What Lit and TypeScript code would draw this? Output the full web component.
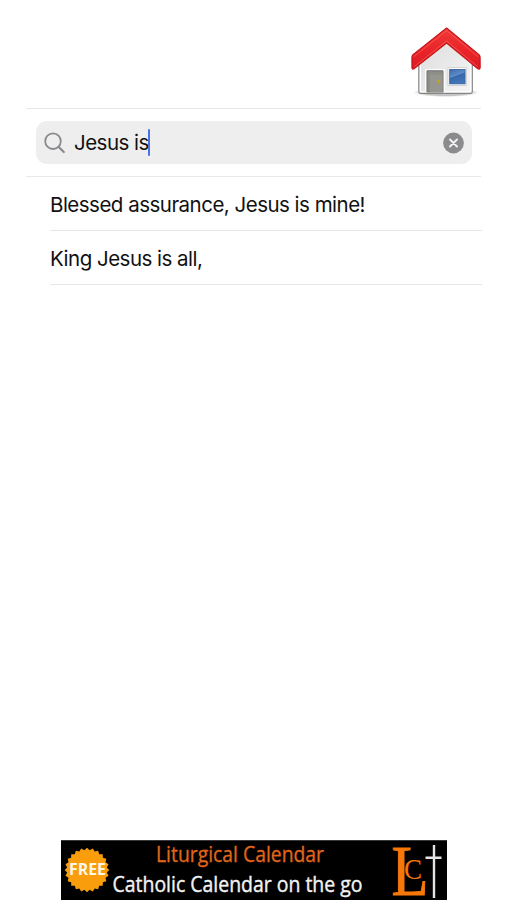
import { LitElement, html, css, svg } from "lit";
import { customElement, property } from "lit/decorators.js";

function burst(cx: number, cy: number, outer: number, inner: number, teeth: number): string {
  const pts: string[] = [];
  for (let i = 0; i < teeth * 2; i++) {
    const r = i % 2 ? inner : outer;
    const a = (Math.PI * i) / teeth - Math.PI / 2;
    pts.push(`${(cx + r * Math.cos(a)).toFixed(2)},${(cy + r * Math.sin(a)).toFixed(2)}`);
  }
  return pts.join(" ");
}

@customElement("home-icon")
class HomeIcon extends LitElement {
  static styles = css`
    :host { display: block; width: 74px; height: 74px; }
    svg { display: block; }
  `;
  render() {
    return html`<svg width="74" height="74" viewBox="0 0 74 74">
      <defs>
        <linearGradient id="roof" x1="0" y1="0" x2="0" y2="1">
          <stop offset="0" stop-color="#f03a38" /><stop offset="0.5" stop-color="#ea262a" /><stop offset="1" stop-color="#dc1a20" />
        </linearGradient>
        <linearGradient id="wall" x1="0" y1="0" x2="1" y2="1">
          <stop offset="0" stop-color="#dcdcdc" /><stop offset="1" stop-color="#f5f5f5" />
        </linearGradient>
        <linearGradient id="pane" x1="0" y1="0" x2="0.4" y2="1">
          <stop offset="0" stop-color="#3a6bab" /><stop offset="0.5" stop-color="#5f8cc6" /><stop offset="0.54" stop-color="#3868ab" /><stop offset="1" stop-color="#4274b8" />
        </linearGradient>
        <radialGradient id="shade">
          <stop offset="0.7" stop-color="#888" stop-opacity="0.5" /><stop offset="1" stop-color="#999" stop-opacity="0" />
        </radialGradient>
      </defs>
      <ellipse cx="37" cy="66.500" rx="33" ry="4.500" fill="url(#shade)" />
      <path d="M9.900 34 L37.500 11 L63.200 34 V65 Q63.200 67.300 61 67.300 H12 Q9.900 67.300 9.900 65Z" fill="url(#wall)" stroke="#858585" stroke-width="1.400" />
      <path d="M11.300 38 L37.500 16 L61.800 38 V65.900 H11.300Z" fill="none" stroke="#fff" stroke-width="1.300" />
      <path d="M17 66 V43.700 H35 V66" fill="#8c8d87" stroke="#fff" stroke-width="1.600" />
      <path d="M18 66 V44.800 H34 V66Z" fill="#8c8d87" stroke="#747571" stroke-width="0.900" />
      <path d="M21 66 V48.500 H33.500 V66Z" fill="#95968f" />
      <circle cx="29.400" cy="55.600" r="1.800" fill="#c0a428" />
      <rect x="39" y="41.800" width="18.600" height="17.600" fill="#fff" stroke="#bbb" stroke-width="0.600" />
      <rect x="40.700" y="43.400" width="15.400" height="14.500" fill="url(#pane)" stroke="#355f99" stroke-width="0.800" />
      <path d="M37.600 2 L4 28.600 Q3 29.500 2.900 31 L2.900 41.500 Q3.100 44 5 42.800 L37.600 17 L68.800 42.800 Q71 44 71.200 41.500 L71.100 31 Q71 29.500 70 28.600Z" fill="url(#roof)" stroke="#c4161b" stroke-width="1.100" stroke-linejoin="round" />
      <path d="M4.500 31 L37.600 4.500 L69.500 31 M5.500 40.500 L37.600 15 L68.500 40.500" fill="none" stroke="#ff7772" stroke-width="0.800" opacity="0.65" />
    </svg>`;
  }
}

@customElement("search-field")
class SearchField extends LitElement {
  @property() value = "";
  static styles = css`
    :host { display: flex; align-items: center; height: 43px; border-radius: 11px; background: #eeeeee; box-sizing: border-box; padding: 0 8px 0 8px; }
    svg { display: block; flex: none; }
    .query { margin-left: 8px; padding-top: 1px; font-size: 20.5px; line-height: 26px; letter-spacing: -0.52px; color: #111; white-space: nowrap; }
    .caret { width: 2.5px; height: 27px; margin-left: -1px; background: #4a72e8; border-radius: 1px; }
    .clear { margin-left: auto; }
  `;
  render() {
    return html`
      <svg width="22" height="22" viewBox="0 0 22 22" fill="none" stroke="#8a8a8e" stroke-width="1.8" stroke-linecap="round">
        <circle cx="9" cy="9.200" r="7.800" /><path d="M14.700 15 L19.800 20" stroke-width="2.200" />
      </svg>
      <span class="query">${this.value}</span><span class="caret"></span>
      <svg class="clear" width="22" height="22" viewBox="0 0 22 22">
        <circle cx="11.500" cy="11" r="10.400" fill="#8b8b8e" />
        <path d="M8 7.500 L15 14.500 M15 7.500 L8 14.500" stroke="#f3f3f3" stroke-width="1.900" stroke-linecap="round" />
      </svg>`;
  }
}

@customElement("ad-banner")
class AdBanner extends LitElement {
  static styles = css`
    :host { display: block; width: 386px; height: 60px; background: #000; }
    svg { display: block; }
    .sans { font-family: "Open Sans", "Noto Sans", sans-serif; }
    .serif { font-family: "Liberation Serif", serif; }
  `;
  render() {
    return html`<svg width="386" height="60" viewBox="0 0 386 60">
      <path d="M0 0.300 H386" stroke="#777" stroke-width="0.600" />
      ${svg`<polygon points=${burst(26, 30, 22.3, 20, 24)} fill="#f99d0d" />`}
      <text class="sans" x="8" y="35.300" font-size="16" font-weight="700" fill="#fff8e8" textLength="37" lengthAdjust="spacingAndGlyphs">FREE</text>
      <text class="sans" x="95" y="22" font-size="21.500" fill="#e2661a" stroke="#e2661a" stroke-width="0.300" textLength="168" lengthAdjust="spacingAndGlyphs">Liturgical Calendar</text>
      <text class="sans" x="51.500" y="51.500" font-size="21.500" fill="#f2f2f2" stroke="#f2f2f2" stroke-width="0.400" textLength="250" lengthAdjust="spacingAndGlyphs">Catholic Calendar on the go</text>
      <text class="serif" x="330.500" y="55" font-size="71" fill="#f77808" stroke="#f77808" stroke-width="1" textLength="37" lengthAdjust="spacingAndGlyphs">L</text>
      <text class="serif" x="343" y="38.500" font-size="29" fill="#f77808" textLength="18" lengthAdjust="spacingAndGlyphs">C</text>
      <path d="M373 5 V58 M364.500 17.800 H380.500" stroke="#e4e4e4" stroke-width="2.400" />
    </svg>`;
  }
}

@customElement("app-root")
class AppRoot extends LitElement {
  private results = ["Blessed assurance, Jesus is mine!", "King Jesus is all,"];
  static styles = css`
    :host { display: flex; flex-direction: column; height: 900px; background: #fff; font-family: Inter, "Liberation Sans", sans-serif; overflow: hidden; }
    header { display: flex; justify-content: flex-end; align-items: flex-start; height: 108px; box-sizing: border-box; padding: 26px 24px 0 0; }
    .search { margin: 0 26px; padding: 12px 9px 12px 10px; border-top: 1px solid #e6e6e6; border-bottom: 1px solid #e9e9e9; }
    .list { margin: 0 25px 0 50px; }
    .row { height: 54px; box-sizing: border-box; display: flex; align-items: center; padding-top: 2px; border-bottom: 1px solid #e6e6e6; font-size: 20.5px; letter-spacing: -0.51px; color: #111; white-space: nowrap; }
    ad-banner { margin: auto 0 0 61px; }
  `;
  render() {
    return html`
      <header><home-icon></home-icon></header>
      <div class="search"><search-field value="Jesus is"></search-field></div>
      <div class="list">${this.results.map((r) => html`<div class="row"><span>${r}</span></div>`)}</div>
      <ad-banner></ad-banner>`;
  }
}
